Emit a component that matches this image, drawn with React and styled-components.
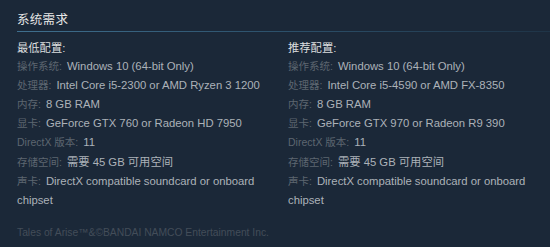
import React from "react";
import styled, { createGlobalStyle } from "styled-components";

const Global = createGlobalStyle`
  html, body { margin: 0; padding: 0; background: #1b2838; }
  body { font-family: "Liberation Sans", Arial, "Noto Sans CJK SC", sans-serif; }
`;

const Page = styled.div`
  width: 550px;
  height: 247px;
  background: #1b2838;
  padding: 0 0 0 17px;
  box-sizing: border-box;
  overflow: hidden;
`;

const Title = styled.h2`
  margin: 0;
  padding: 14px 0 5px;
  font-size: 12.5px;
  line-height: 13px;
  font-weight: normal;
  color: #e6e6e6;
  letter-spacing: 0.3px;
  border-bottom: 1px solid transparent;
  background: linear-gradient(to right, #3f6f8e 0%, #2c506a 50%, #1f3447 100%) no-repeat left bottom / 100% 1px;
`;

const Columns = styled.div`
  display: grid;
  grid-template-columns: 271px 245px;
  margin-top: 6px;
`;

const Col = styled.div`
  font-size: 11.3px;
  line-height: 19.1px;
  color: #acb2b8;
`;

const Heading = styled.div`
  color: #dcdedf;
  margin-bottom: -1px;
`;

const Row = styled.div``;

const Label = styled.span`
  color: #5d6670;
  margin-right: 5px;
  font-size: 10.5px;
`;

const Footer = styled.div`
  margin-top: 17px;
  font-size: 10.3px;
  color: #434d59;
`;

const left = [
  ["操作系统:", "Windows 10 (64-bit Only)"],
  ["处理器:", "Intel Core i5-2300 or AMD Ryzen 3 1200"],
  ["内存:", "8 GB RAM"],
  ["显卡:", "GeForce GTX 760 or Radeon HD 7950"],
  ["DirectX 版本:", "11"],
  ["存储空间:", "需要 45 GB 可用空间"],
  ["声卡:", "DirectX compatible soundcard or onboard chipset"],
];

const right = [
  ["操作系统:", "Windows 10 (64-bit Only)"],
  ["处理器:", "Intel Core i5-4590 or AMD FX-8350"],
  ["内存:", "8 GB RAM"],
  ["显卡:", "GeForce GTX 970 or Radeon R9 390"],
  ["DirectX 版本:", "11"],
  ["存储空间:", "需要 45 GB 可用空间"],
  ["声卡:", "DirectX compatible soundcard or onboard chipset"],
];

function Spec({ title, rows }) {
  return (
    <Col>
      <Heading>{title}</Heading>
      {rows.map(([l, v]) => (
        <Row key={l}>
          <Label>{l}</Label>
          {v}
        </Row>
      ))}
    </Col>
  );
}

export default function App() {
  return (
    <Page>
      <Global />
      <Title>系统需求</Title>
      <Columns>
        <Spec title="最低配置:" rows={left} />
        <Spec title="推荐配置:" rows={right} />
      </Columns>
      <Footer>Tales of Arise™&amp;©BANDAI NAMCO Entertainment Inc.</Footer>
    </Page>
  );
}
